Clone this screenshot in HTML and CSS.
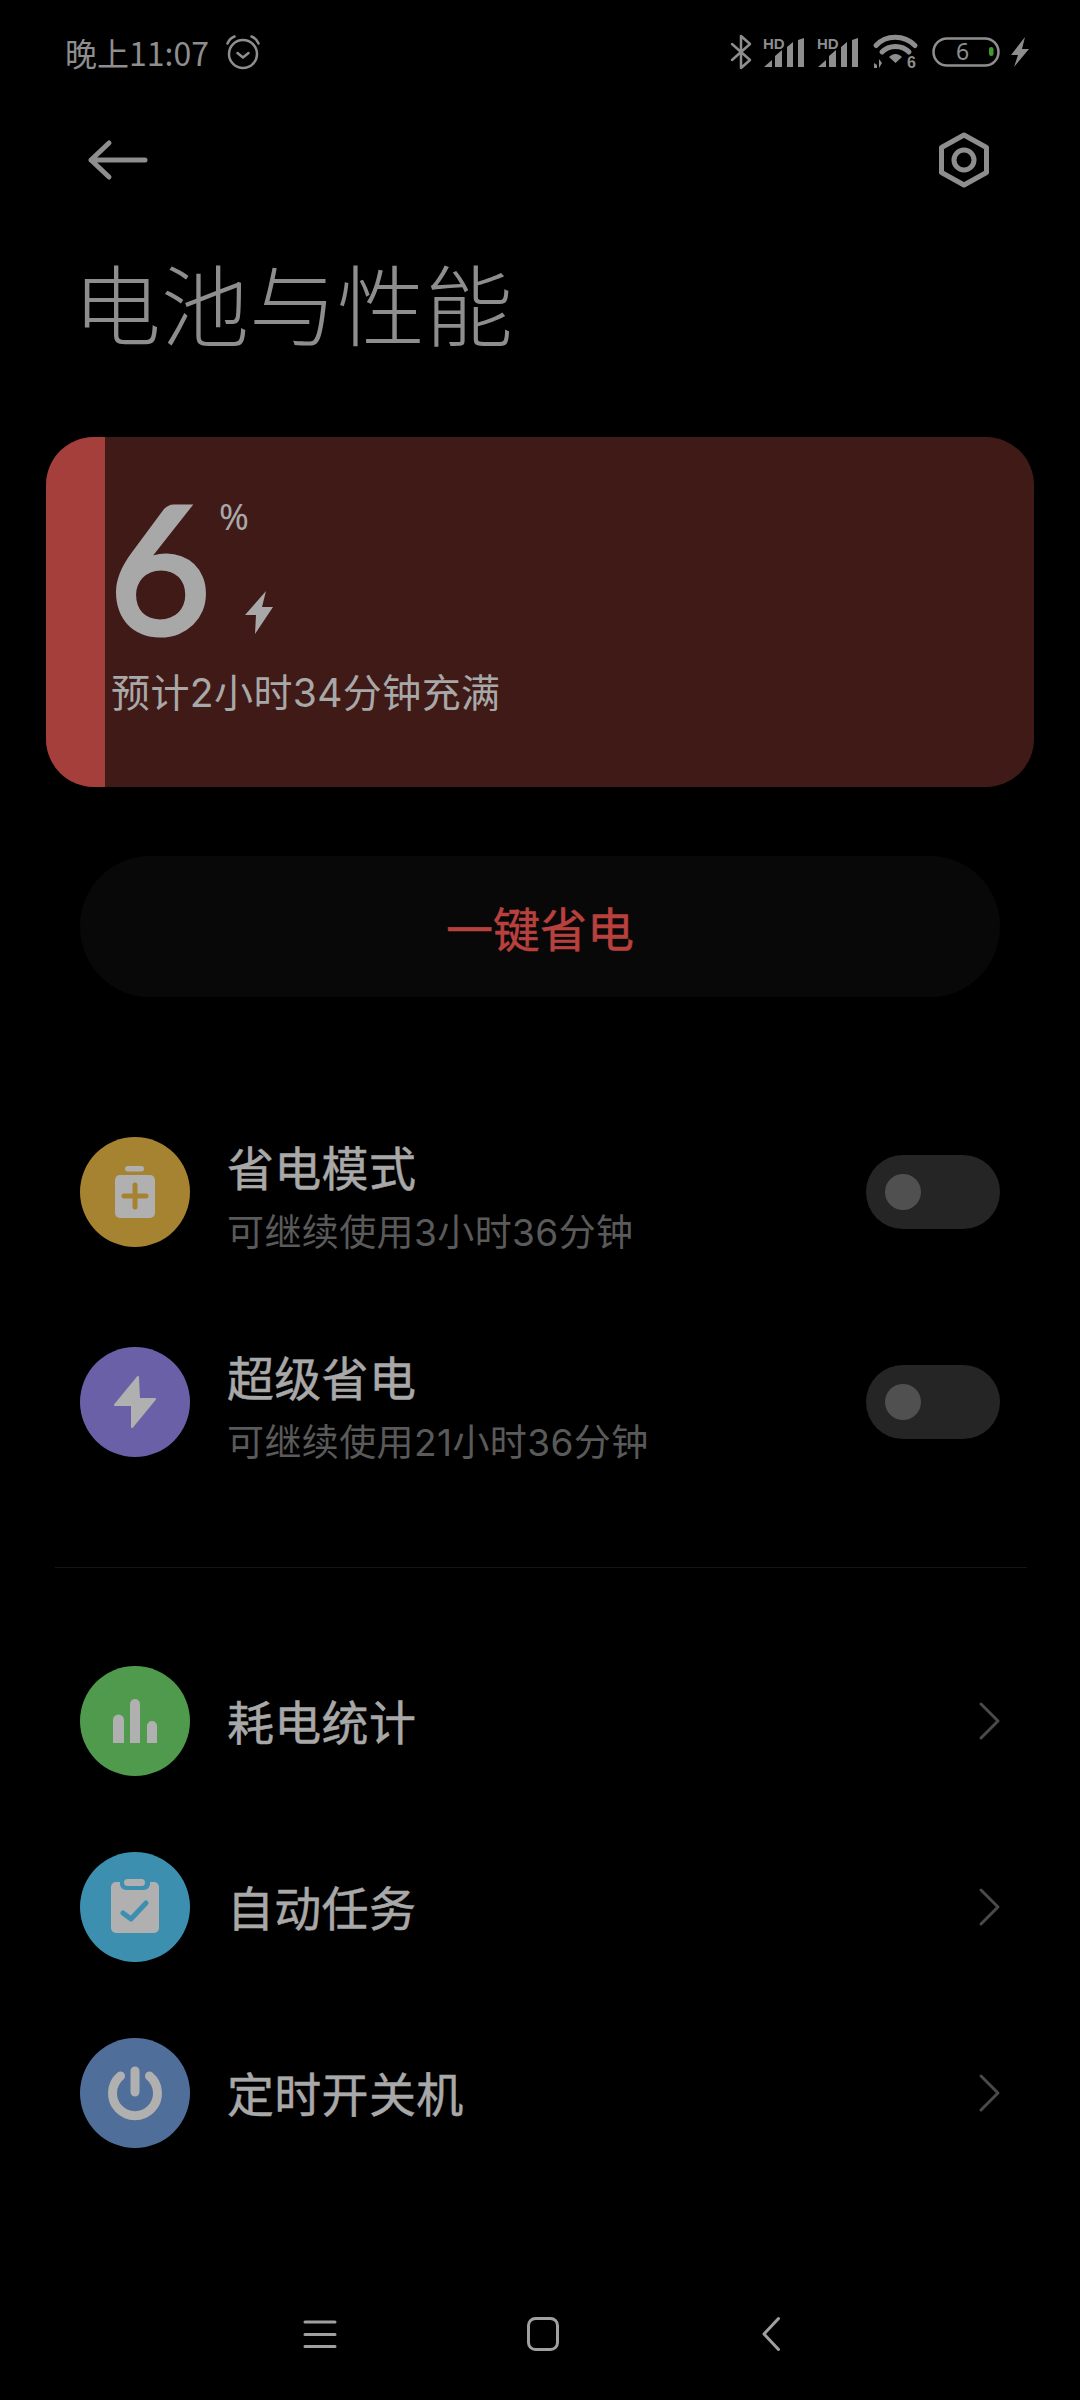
FILE: index.html
```html
<!DOCTYPE html>
<html lang="zh-CN">
<head>
<meta charset="utf-8">
<title>电池与性能</title>
<link rel="stylesheet" href="styles.css">
</head>
<body>
<main class="screen">
  <header class="status">
    <div class="status-left">
      <span class="time">晚上11:07</span>
      <svg class="ic-alarm" viewBox="0 0 34 34"><circle cx="17" cy="19" r="14" class="ln"/><path class="ln" d="M11.5 18l5.5 4.5 5.5-4.5M1.5 8.5C3 5 5.5 2.500 8.500 1.500M32.500 8.500C31 5 28.500 2.500 25.500 1.500"/></svg>
    </div>
    <div class="status-right">
      <svg class="ic-bt" viewBox="0 0 22 36"><path class="ln" d="M2 10l18 16-9 8V2l9 8L2 26"/></svg>
      <svg class="ic-sig" viewBox="0 0 42 30"><text x="0" y="12" class="hd">HD</text><path class="fill" d="M1 30l8-7v7zM12 30V19l7-6v17zM24 30V10l6-5v25zM35 30V3l6-2v29z"/></svg>
      <svg class="ic-sig" viewBox="0 0 42 30"><text x="0" y="12" class="hd">HD</text><path class="fill" d="M1 30l8-7v7zM12 30V19l7-6v17zM24 30V10l6-5v25zM35 30V3l6-2v29z"/></svg>
      <svg class="ic-wifi" viewBox="0 0 44 34"><path class="ln wf" d="M2 10.500C12-.5 30-.5 41 10.500M8 17C15 9.500 28 9.500 35 17"/><path class="fill" d="M15 22c4-4 9-4 13 0l-6.500 6z"/><path class="fill" d="M0 33v-5l3 2v3zM5 33V24l3 4z" /><text x="33" y="33" class="wifi-n">6</text></svg>
      <svg class="ic-bat" viewBox="0 0 68 30"><rect x="1.500" y="1.500" width="65" height="27" rx="13.500" class="ln"/><text x="24" y="23" class="bat-n">6</text><rect x="57" y="10" width="4.500" height="9" rx="2.200" class="green"/></svg>
      <svg class="ic-chg" viewBox="0 0 20 30"><path class="fill" d="M15 0L1 18h7L4 30l15-18h-7z"/></svg>
    </div>
  </header>

  <nav class="topbar">
    <svg class="ic-back" viewBox="0 0 58 40"><path d="M21 3L3 20l18 17M3 20h54"/></svg>
    <svg class="ic-gear" viewBox="0 0 52 56"><path class="ln gear" d="M26 3l22.500 12.500v25L26 53 3.500 40.500v-25z"/><circle cx="26" cy="28" r="10" class="ln gear"/></svg>
  </nav>

  <h1 class="page-title">电池与性能</h1>

  <section class="card">
    <div class="card-fill"></div>
    <div class="card-body">
      <div class="level">
        <span class="level-num">6</span>
        <div class="level-side">
          <span class="level-pct">%</span>
          <svg class="level-bolt" viewBox="0 0 28 43"><path d="M21 0L0 24h11l-1 19 18-27H17z"/></svg>
        </div>
      </div>
      <p class="level-note">预计2小时34分钟充满</p>
    </div>
  </section>

  <button class="save-btn">一键省电</button>

  <section class="group group-modes">
    <div class="row row-mode">
      <svg class="badge" viewBox="0 0 110 110"><circle cx="55" cy="55" r="55" fill="#a68330"/><rect x="45" y="29" width="19" height="5.500" rx="2.700" class="gly"/><rect x="35" y="38" width="40" height="43" rx="5" class="gly"/><path d="M44 59h22M55 48v22" class="cut" stroke="#a68330"/></svg>
      <div class="row-text">
        <div class="row-title">省电模式</div>
        <div class="row-sub">可继续使用3小时36分钟</div>
      </div>
      <div class="toggle"><span class="knob"></span></div>
    </div>
    <div class="row row-mode">
      <svg class="badge" viewBox="0 0 110 110"><circle cx="55" cy="55" r="55" fill="#6a60a8"/><path d="M58 30L35 58h17l0 22 23-28H59z" class="gly rnd"/></svg>
      <div class="row-text">
        <div class="row-title">超级省电</div>
        <div class="row-sub">可继续使用21小时36分钟</div>
      </div>
      <div class="toggle"><span class="knob"></span></div>
    </div>
  </section>

  <hr class="divider">

  <section class="group group-links">
    <div class="row row-link">
      <svg class="badge" viewBox="0 0 110 110"><circle cx="55" cy="55" r="55" fill="#4f9a4c"/><path class="gly" d="M33 77V54a5.500 5.500 0 0 1 11 0v23zM50 77V38a5 5 0 0 1 10 0v39zM67 77V60a5 5 0 0 1 10 0v17z"/></svg>
      <span class="row-title">耗电统计</span>
      <svg class="chev" viewBox="0 0 22 38"><path d="M2 2l17 17L2 36"/></svg>
    </div>
    <div class="row row-link">
      <svg class="badge" viewBox="0 0 110 110"><circle cx="55" cy="55" r="55" fill="#3d8fb0"/><path class="gly" d="M36 30h4v2a6 6 0 0 0 6 6h18a6 6 0 0 0 6-6v-2h4a5 5 0 0 1 5 5v41a5 5 0 0 1-5 5H36a5 5 0 0 1-5-5V35a5 5 0 0 1 5-5z"/><rect x="44" y="27" width="21" height="7" rx="3.500" class="gly"/><path d="M43 61l8 6 15-16" class="cut" stroke="#3d8fb0"/></svg>
      <span class="row-title">自动任务</span>
      <svg class="chev" viewBox="0 0 22 38"><path d="M2 2l17 17L2 36"/></svg>
    </div>
    <div class="row row-link">
      <svg class="badge" viewBox="0 0 110 110"><circle cx="55" cy="55" r="55" fill="#4f6f9a"/><path class="pow" d="M40.500 38a22.500 22.500 0 1 0 29 0M55 33v21"/></svg>
      <span class="row-title">定时开关机</span>
      <svg class="chev" viewBox="0 0 22 38"><path d="M2 2l17 17L2 36"/></svg>
    </div>
  </section>

  <footer class="navbar">
    <svg class="nav-menu" viewBox="0 0 30 28"><path d="M0 2h30M0 14.500h30M0 26.500h30"/></svg>
    <svg class="nav-home" viewBox="0 0 32 34"><rect x="1.500" y="1.500" width="29" height="31" rx="7"/></svg>
    <svg class="nav-back" viewBox="0 0 18 34"><path d="M16.500 1.500L2 17l14.500 15.500"/></svg>
  </footer>
</main>
</body>
</html>
```

FILE: styles.css
```css
* { box-sizing: border-box; }
html, body { margin: 0; padding: 0; background: #000; }
body { font-family: "Noto Sans CJK SC", "Noto Sans", sans-serif; color: #a8a8a8; }
svg { display: block; flex: none; overflow: visible; }
.ln { fill: none; stroke: #8e8e8e; stroke-width: 2.500; stroke-linecap: round; stroke-linejoin: round; }
.fill { fill: #8e8e8e; }
.screen { width: 1080px; height: 2400px; display: flex; flex-direction: column; overflow: hidden; }

.status { height: 104px; display: flex; justify-content: space-between; align-items: center; padding: 0 50px 0 65px; }
.status-left { display: flex; align-items: center; }
.time { font-size: 32px; line-height: 38px; color: #8e8e8e; }
.ic-alarm { width: 34px; height: 34px; margin-left: 17px; }
.status-right { display: flex; align-items: center; }
.ic-bt { width: 22px; height: 36px; margin-right: 11px; }
.ic-sig { width: 42px; height: 30px; margin-right: 12px; }
.ic-sig + .ic-sig { margin-right: 15px; }
.hd { font: 700 15px "Liberation Sans", sans-serif; fill: #8e8e8e; }
.ic-wifi { width: 44px; height: 34px; margin-right: 14px; }
.wf { stroke-width: 5; }
.wifi-n { font: 700 16px "Liberation Sans", sans-serif; fill: #8e8e8e; }
.ic-bat { width: 68px; height: 30px; margin-right: 10px; }
.bat-n { font: 400 23px "Noto Sans", sans-serif; fill: #8e8e8e; }
.green { fill: #3f9a2a; }
.ic-chg { width: 20px; height: 30px; }

.topbar { height: 112px; display: flex; justify-content: space-between; align-items: center; padding: 0 90px 0 88px; }
.ic-back { width: 58px; height: 40px; }
.ic-back path { fill: none; stroke: #8e8e8e; stroke-width: 5; stroke-linecap: round; stroke-linejoin: round; }
.ic-gear { width: 52px; height: 56px; }
.gear { stroke-width: 5; }

.page-title { margin: 25px 0 0 73px; font-size: 88px; line-height: 120px; font-weight: 300; color: #8e8e8e; }

.card { margin: 76px 0 0 46px; width: 988px; height: 350px; border-radius: 48px; overflow: hidden; display: flex; background: #3f1a17; }
.card-fill { width: 59px; background: #a53f3b; }
.card-body { padding: 0 0 0 7px; }
.level { display: flex; height: 220px; }
.level-num { font-family: Lato, sans-serif; font-size: 176px; line-height: 220px; font-weight: 400; color: #a8a8a8; -webkit-text-stroke: 5px #a8a8a8; margin: 19px 0 0 -3px; }
.level-side { display: flex; flex-direction: column; margin-left: 8px; }
.level-pct { font-family: "Noto Sans", sans-serif; font-size: 36px; line-height: 40px; margin-top: 60px; }
.level-bolt { width: 28px; height: 43px; margin: 54px 0 0 26px; fill: #a8a8a8; }
.level-note { margin: 6px 0 0 -1px; font-family: Inter, "Noto Sans CJK SC", sans-serif; font-size: 39px; line-height: 60px; letter-spacing: 0.4px; color: #a8a8a8; white-space: nowrap; }

.save-btn { display: block; margin: 69px 0 0 80px; width: 920px; height: 141px; border: 0; border-radius: 70px; background: #080808; color: #b8413e; -webkit-text-stroke: 0.5px #b8413e; font: 400 47px "Noto Sans CJK SC", sans-serif; }

.group { display: flex; flex-direction: column; margin: 0 80px; }
.group-modes { margin-top: 140px; gap: 100px; }
.group-links { margin-top: 98px; gap: 76px; }
.row { display: flex; height: 110px; align-items: center; }
.badge { width: 110px; height: 110px; margin-right: 37px; }
.gly { fill: #b0b0b0; }
.rnd { stroke: #b0b0b0; stroke-width: 2; stroke-linejoin: round; }
.cut { fill: none; stroke-width: 5; stroke-linecap: round; stroke-linejoin: round; }
.pow { fill: none; stroke: #b0b0b0; stroke-width: 9; stroke-linecap: round; }
.row-text { flex: 1; align-self: flex-start; margin-top: -1px; }
.row-title { display: block; font-size: 47px; line-height: 60px; letter-spacing: 0.3px; color: #a8a8a8; -webkit-text-stroke: 0.5px #a8a8a8; }
.row-sub { margin-top: 6px; font-family: Inter, "Noto Sans CJK SC", sans-serif; font-size: 37px; line-height: 62px; letter-spacing: 0.4px; color: #5a5a5a; white-space: nowrap; }
.row-link .row-title { flex: 1; margin-top: -3px; }
.toggle { width: 134px; height: 74px; border-radius: 37px; background: #252525; padding: 19px; }
.knob { display: block; width: 36px; height: 36px; border-radius: 50%; background: #505050; }
.chev { width: 22px; height: 38px; margin-right: -1px; }
.chev path { fill: none; stroke: #4a4a4a; stroke-width: 3; stroke-linecap: round; stroke-linejoin: round; }

.divider { margin: 110px 8px 0 55px; width: 972px; height: 1px; border: 0; background: #151515; }

.navbar { margin-top: auto; height: 122px; position: relative; display: flex; }
.navbar { padding: 41px 0 0 305px; align-items: flex-start; }
.nav-menu { width: 30px; height: 28px; margin-top: 1px; }
.nav-menu path, .nav-home rect, .nav-back path { fill: none; stroke: #a0a0a0; stroke-linecap: round; stroke-linejoin: round; stroke-width: 3; }
.nav-home { width: 32px; height: 34px; margin: -2px 0 0 192px; }
.nav-back { width: 18px; height: 34px; margin: -2px 0 0 203px; }
```
